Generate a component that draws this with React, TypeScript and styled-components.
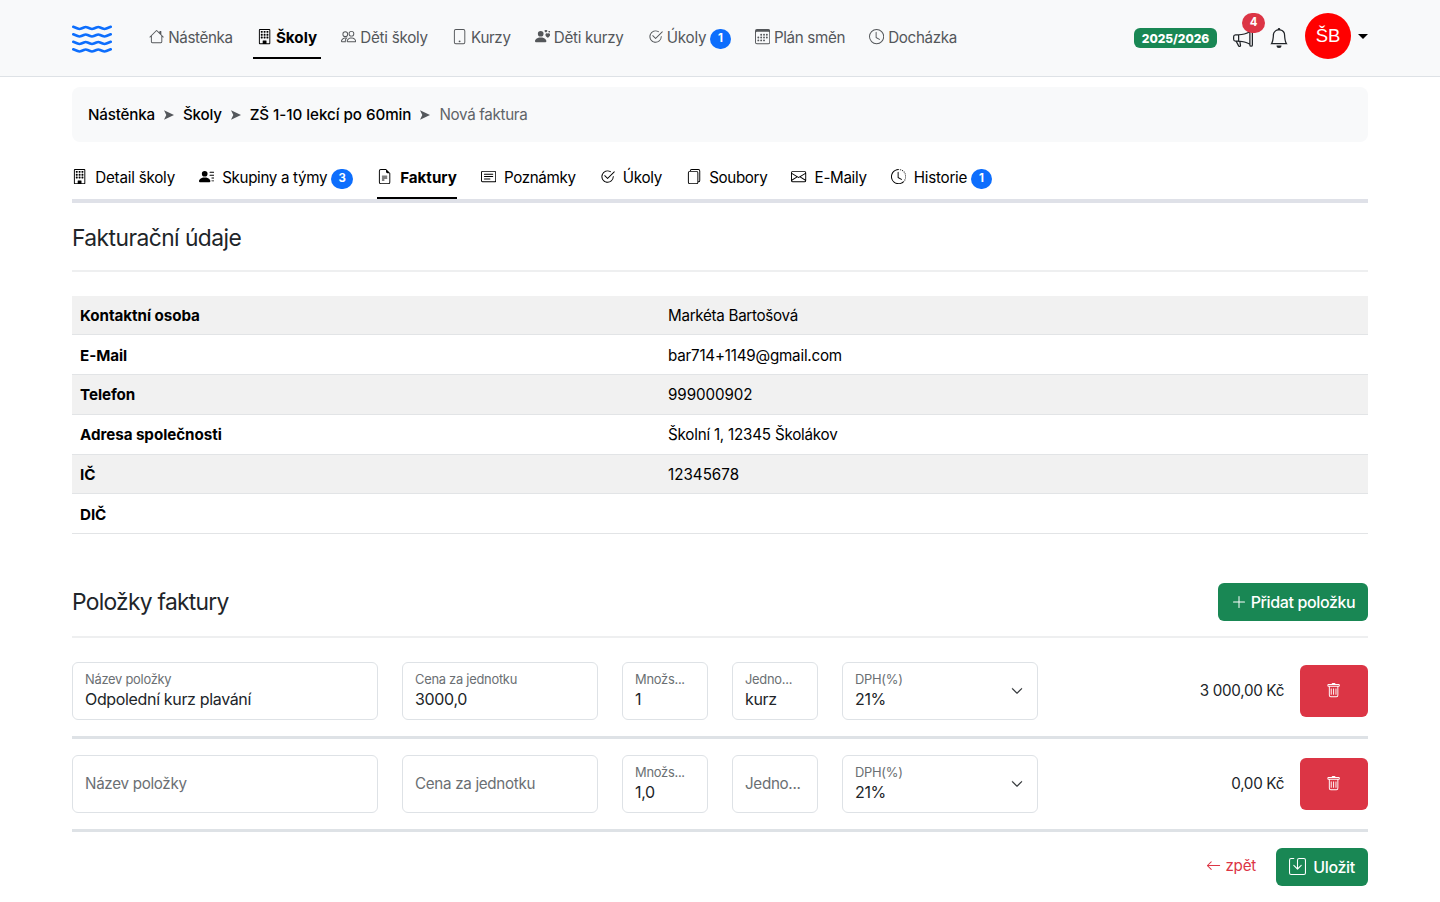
import React from 'react';
import styled, { createGlobalStyle } from 'styled-components';
import {
  BsHouse, BsBuilding, BsPeople, BsTablet, BsPersonHearts, BsCheck2Circle, BsCalendar3, BsClock,
  BsMegaphone, BsBell, BsPersonLinesFill, BsFileEarmarkText, BsCardText, BsFiles, BsEnvelope,
  BsClockHistory, BsPlusLg, BsTrash, BsArrowLeft, BsSave, BsWater, BsChevronDown,
} from 'react-icons/bs';

const GlobalStyle = createGlobalStyle`
  *, *::before, *::after { box-sizing: border-box; }
  body {
    margin: 0;
    background: #fff;
    color: #212529;
    font: 400 15.2px/22.8px Inter, "Liberation Sans", sans-serif;
  }
  svg { display: block; flex: none; }
  button, input { font-family: inherit; }
`;

const Navbar = styled.header`
  display: flex;
  align-items: center;
  height: 77px;
  padding: 0 72px;
  background: #f8f9fa;
  border-bottom: 1px solid #dee2e6;
`;
const Logo = styled.a`
  margin-right: 33px;
  color: #0d6efd;
`;
const NavList = styled.nav`
  display: flex;
  gap: 16px;
`;
const NavItem = styled.a<{ $active?: boolean }>`
  display: flex;
  align-items: center;
  gap: 4px;
  height: 42px;
  padding: 0 4px;
  white-space: nowrap;
  color: ${p => (p.$active ? '#000' : '#54575a')};
  font-weight: ${p => (p.$active ? 700 : 400)};
  border-bottom: 2px solid ${p => (p.$active ? '#000' : 'transparent')};
`;
const Label = styled.span<{ $ls?: number }>`
  padding-top: 2px;
  letter-spacing: ${p => p.$ls ?? 0}px;
`;
const Pill = styled.span`
  display: inline-flex;
  align-items: center;
  justify-content: center;
  height: 20px;
  min-width: 20.5px;
  padding: 0 7px;
  border-radius: 10px;
  background: #0d6efd;
  color: #fff;
  font-size: 11.4px;
  font-weight: 700;
  line-height: 1;
  margin-top: 3px;
`;
const NavRight = styled.div`
  display: flex;
  align-items: center;
  margin-left: auto;
  color: #212529;
`;
const Season = styled.span`
  display: flex;
  align-items: center;
  justify-content: center;
  width: 83px;
  height: 20px;
  padding-top: 2px;
  margin-right: 16px;
  border-radius: 6px;
  background: #198754;
  color: #fff;
  font-size: 12px;
  font-weight: 800;
  letter-spacing: -0.05px;
`;
const Announce = styled.span`
  position: relative;
  margin-right: 16px;
`;
const Count = styled(Pill)`
  position: absolute;
  left: 9px;
  top: -18px;
  width: 23px;
  background: #dc3545;
`;
const Avatar = styled.span`
  display: flex;
  align-items: center;
  justify-content: center;
  width: 46px;
  height: 46px;
  margin: -4px 7px 0 16px;
  border-radius: 50%;
  background: #f00;
  color: #fff;
  font: 18.5px "Liberation Sans", sans-serif;
`;
const Caret = styled.span`
  border: 5px solid transparent;
  border-top-color: #000;
  border-bottom: 0;
  margin-top: -4px;
`;

const Page = styled.main`
  padding: 10px 72px 0;
`;
const Breadcrumb = styled.nav`
  display: flex;
  align-items: center;
  height: 55px;
  padding: 0 16px;
  border-radius: 8px;
  background: #f8f9fa;
  color: #5f6468;
  white-space: nowrap;
`;
const Crumb = styled(Label)`
  color: #000;
  font-weight: 500;
`;
const Arrow = styled.svg`
  margin: 0 9px;
`;
const Tabs = styled.nav`
  display: flex;
  gap: 24px;
  height: 60.5px;
  padding-top: 14.5px;
  border-bottom: 4px solid #dfe1e8;
`;
const Tab = styled.a<{ $active?: boolean }>`
  display: flex;
  align-items: center;
  gap: 8px;
  height: 42px;
  white-space: nowrap;
  color: #000;
  font-weight: ${p => (p.$active ? 700 : 400)};
  border-bottom: 2px solid ${p => (p.$active ? '#000' : 'transparent')};
`;
const TabLabel = styled(Label)`
  padding-top: 3px;
`;
const TabPill = styled(Pill)<{ $width: number }>`
  width: ${p => p.$width}px;
  margin-top: 4px;
  margin-left: -4px;
`;
const SectionHead = styled.div<{ $top: number; $height: number }>`
  display: flex;
  align-items: center;
  justify-content: space-between;
  height: ${p => p.$height}px;
  margin-top: ${p => p.$top}px;
`;
const Title = styled.h2<{ $ls: number }>`
  margin: 0;
  font-size: 22.8px;
  font-weight: 400;
  line-height: 28px;
  letter-spacing: ${p => p.$ls}px;
`;
const Rule = styled.hr<{ $top: number }>`
  height: 2px;
  margin: ${p => p.$top}px 0 0;
  border: 0;
  background: #eeeff0;
`;
const Details = styled.table`
  width: 100%;
  margin-top: 23.5px;
  border-collapse: separate;
  border-spacing: 0;
  table-layout: fixed;
  color: #000;
`;
const DetailRow = styled.tr`
  height: 39.8px;
  &:nth-child(odd) { background: #f1f1f1; }
`;
const Key = styled.th`
  width: 588px;
  padding: 9.4px 8px 6.6px;
  border-bottom: 1px solid #e2e4e6;
  text-align: left;
  font-weight: 700;
  letter-spacing: -0.06px;
`;
const Value = styled.td<{ $ls: number }>`
  padding: 9.4px 8px 6.6px;
  border-bottom: 1px solid #e2e4e6;
  letter-spacing: ${p => p.$ls}px;
`;
const Button = styled.button<{ $gap: number; $width: number }>`
  display: flex;
  align-items: center;
  justify-content: center;
  gap: ${p => p.$gap}px;
  width: ${p => p.$width}px;
  height: 38px;
  padding: 0;
  border: 0;
  border-radius: 6px;
  background: #198754;
  color: #fff;
  font-size: 16px;
  font-weight: 500;
  letter-spacing: -0.38px;
  white-space: nowrap;
`;
const ItemList = styled.section`
  padding-top: 8px;
`;
const ItemRow = styled.div`
  display: flex;
  align-items: center;
  gap: 24px;
  height: 93px;
  border-bottom: 3px solid #dee2e6;
`;
const Field = styled.label<{ $width: number }>`
  display: flex;
  flex-direction: column;
  justify-content: center;
  position: relative;
  width: ${p => p.$width}px;
  height: 58px;
  padding: 0 12px;
  border: 1px solid #dee2e6;
  border-radius: 6px;
  white-space: nowrap;
`;
const Caption = styled.span<{ $large?: boolean }>`
  color: #6b6f73;
  font-size: ${p => (p.$large ? 15.2 : 12.9)}px;
  line-height: ${p => (p.$large ? 20 : 19)}px;
  letter-spacing: ${p => (p.$large ? -0.31 : -0.26)}px;
`;
const Content = styled.span`
  padding-bottom: 3px;
  font-size: 16px;
  line-height: 20px;
  letter-spacing: -0.34px;
`;
const Chevron = styled(BsChevronDown)`
  position: absolute;
  right: 14px;
  top: 22px;
`;
const Price = styled.span`
  margin-left: auto;
  margin-right: -8px;
  padding-top: 1px;
  letter-spacing: -0.32px;
`;
const Delete = styled.button`
  display: flex;
  align-items: center;
  justify-content: center;
  width: 68px;
  height: 52px;
  border: 0;
  border-radius: 6px;
  background: #dc3545;
  color: #fff;
`;
const Footer = styled.footer`
  display: flex;
  align-items: center;
  justify-content: flex-end;
  gap: 20px;
  margin-top: 16px;
`;
const Back = styled.a`
  display: flex;
  align-items: center;
  gap: 4px;
  margin-top: -2px;
  color: #dc3545;
`;

const navItems = [
  { icon: BsHouse, text: 'Nástěnka', ls: -0.37 },
  { icon: BsBuilding, text: 'Školy', ls: 0, active: true },
  { icon: BsPeople, text: 'Děti školy', ls: -0.25 },
  { icon: BsTablet, text: 'Kurzy', ls: -0.37 },
  { icon: BsPersonHearts, text: 'Děti kurzy', ls: -0.29 },
  { icon: BsCheck2Circle, text: 'Úkoly', ls: -0.25, count: 1 },
  { icon: BsCalendar3, text: 'Plán směn', ls: -0.35 },
  { icon: BsClock, text: 'Docházka', ls: -0.35 },
];
const tabs = [
  { icon: BsBuilding, text: 'Detail školy', ls: -0.22 },
  { icon: BsPersonLinesFill, text: 'Skupiny a týmy', ls: -0.35, count: 3, pill: 22 },
  { icon: BsFileEarmarkText, text: 'Faktury', ls: -0.06, active: true },
  { icon: BsCardText, text: 'Poznámky', ls: -0.36 },
  { icon: BsCheck2Circle, text: 'Úkoly', ls: -0.3 },
  { icon: BsFiles, text: 'Soubory', ls: -0.36 },
  { icon: BsEnvelope, text: 'E-Maily', ls: -0.33 },
  { icon: BsClockHistory, text: 'Historie', ls: -0.26, count: 1, pill: 20.5 },
];
const details = [
  { name: 'Kontaktní osoba', value: 'Markéta Bartošová', ls: -0.3 },
  { name: 'E-Mail', value: 'bar714+1149@gmail.com', ls: -0.22 },
  { name: 'Telefon', value: '999000902', ls: -0.1 },
  { name: 'Adresa společnosti', value: 'Školní 1, 12345 Školákov', ls: -0.22 },
  { name: 'IČ', value: '12345678', ls: 0 },
  { name: 'DIČ', value: '', ls: 0 },
];
const items = [
  { name: 'Odpolední kurz plavání', price: '3000,0', amount: '1', unit: 'kurz', total: '3 000,00 Kč' },
  { name: '', price: '', amount: '1,0', unit: '', total: '0,00 Kč' },
];

function FloatingField({ width, caption, value, select }: { width: number; caption: string; value: string; select?: boolean }) {
  return (
    <Field $width={width}>
      <Caption $large={!value}>{caption}</Caption>
      {value && <Content>{value}</Content>}
      {select && <Chevron size={12} stroke="currentColor" strokeWidth={0.7} />}
    </Field>
  );
}

const Separator = () => (
  <Arrow width="10" height="10" viewBox="0 0 10 10" fill="#54585c">
    <path d="M0 .3 10 5 0 9.7 2.3 5z" />
  </Arrow>
);

export default function App() {
  return (
    <>
      <GlobalStyle />
      <Navbar>
        <Logo><BsWater size={40} /></Logo>
        <NavList>
          {navItems.map(({ icon: Icon, text, ls, active, count }) => (
            <NavItem key={text} $active={active}>
              <Icon size={15.2} />
              <Label $ls={ls}>{text}</Label>
              {count && <Pill>{count}</Pill>}
            </NavItem>
          ))}
        </NavList>
        <NavRight>
          <Season>2025/2026</Season>
          <Announce><BsMegaphone size={20} /><Count>4</Count></Announce>
          <BsBell size={20} />
          <Avatar>ŠB</Avatar>
          <Caret />
        </NavRight>
      </Navbar>
      <Page>
        <Breadcrumb>
          <Crumb $ls={-0.2}>Nástěnka</Crumb><Separator />
          <Crumb $ls={-0.2}>Školy</Crumb><Separator />
          <Crumb $ls={-0.06}>ZŠ 1-10 lekcí po 60min</Crumb><Separator />
          <Label $ls={-0.33}>Nová faktura</Label>
        </Breadcrumb>
        <Tabs>
          {tabs.map(({ icon: Icon, text, ls, active, count, pill }) => (
            <Tab key={text} $active={active}>
              <Icon size={15.2} />
              <TabLabel $ls={ls}>{text}</TabLabel>
              {count && <TabPill $width={pill ?? 21}>{count}</TabPill>}
            </Tab>
          ))}
        </Tabs>
        <SectionHead $top={16.5} $height={37}><Title $ls={-0.55}>Fakturační údaje</Title></SectionHead>
        <Rule $top={14} />
        <Details>
          <tbody>
            {details.map(({ name, value, ls }) => (
              <DetailRow key={name}><Key>{name}</Key><Value $ls={ls}>{value}</Value></DetailRow>
            ))}
          </tbody>
        </Details>
        <SectionHead $top={48.5} $height={38}>
          <Title $ls={-0.72}>Položky faktury</Title>
          <Button $width={150} $gap={4}><BsPlusLg size={16} />Přidat položku</Button>
        </SectionHead>
        <Rule $top={15} />
        <ItemList>
          {items.map(item => (
            <ItemRow key={item.total}>
              <FloatingField width={306} caption="Název položky" value={item.name} />
              <FloatingField width={196} caption="Cena za jednotku" value={item.price} />
              <FloatingField width={86} caption="Množs..." value={item.amount} />
              <FloatingField width={86} caption="Jedno..." value={item.unit} />
              <FloatingField width={196} caption="DPH(%)" value="21%" select />
              <Price>{item.total}</Price>
              <Delete><BsTrash size={15.2} /></Delete>
            </ItemRow>
          ))}
        </ItemList>
        <Footer>
          <Back><BsArrowLeft size={15.2} /><Label $ls={-0.25}>zpět</Label></Back>
          <Button $width={92} $gap={7}><BsSave size={17} />Uložit</Button>
        </Footer>
      </Page>
    </>
  );
}
